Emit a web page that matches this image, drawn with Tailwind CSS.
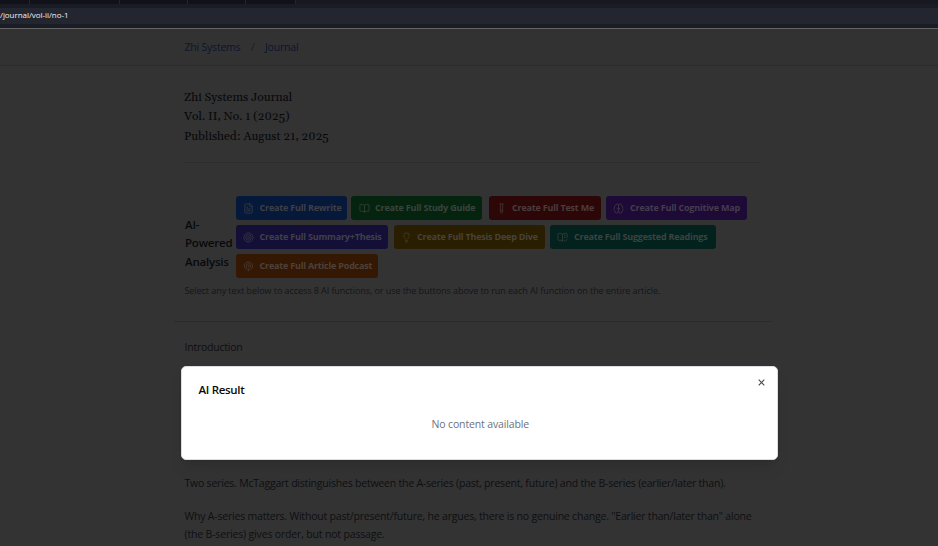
<!DOCTYPE html>
<html lang="en">
<head>
<meta charset="utf-8">
<title>Zhi Systems Journal</title>
<script src="https://cdn.jsdelivr.net/npm/@tailwindcss/browser@4"></script>
</head>
<body class="relative h-[546px] w-[938px] overflow-hidden bg-[#333] font-['Open_Sans','Noto_Sans',sans-serif] text-[10.5px] tracking-[-0.21px] whitespace-nowrap text-[#0e0f12]">
  <!-- browser chrome -->
  <div class="flex h-1 bg-[#181820]">
    <div class="flex w-[296px] bg-[#11111a]">
      <div class="w-[30px] border-r border-[#24252e]"></div>
      <div class="w-[90px] border-r border-[#24252e]"></div>
      <div class="w-[68px] border-r border-[#24252e]"></div>
      <div class="w-[58px] border-r border-[#24252e]"></div>
      <div class="w-[50px] border-r border-[#24252e]"></div>
    </div>
  </div>
  <div class="h-1 bg-[#1a1c25]"></div>
  <div class="flex h-4 items-center bg-[#23262f] text-[8px] leading-4 font-medium tracking-[-0.05px] text-[#f0f1f3]"><span class="relative -top-px">/journal/vol-ii/no-1</span></div>
  <div class="h-1 bg-[#1b1d26]"></div>
  <div class="h-px bg-[#646465]"></div>

  <nav class="flex h-[37px] items-center border-b border-[#2b2b2c] bg-[#323232] pt-[2px] pl-[184.5px] text-[#0b1530]">
    <span class="w-[66.500px]">Zhi Systems</span><span class="w-[14px] text-[#191b1f]">/</span><span>Journal</span>
  </nav>

  <main>
    <header class="ml-[184px] h-[97px] w-[576px] border-b border-[#2d2d2e] pt-[21.5px] font-['Gelasio','Georgia','Liberation_Serif',serif] text-[12px] leading-[19.5px] tracking-normal text-[#07080a] oldstyle-nums">
      <p>Zhi Systems Journal</p>
      <p>Vol. II, No. 1 (2025)</p>
      <p>Published: August 21, 2025</p>
    </header>

    <section class="ml-[174px] h-[159px] w-[598px] border-b border-[#2b2b2c] pt-[33px] pl-[10px]">
      <div class="flex h-[82px]">
        <h3 class="w-[52px] pt-[19.500px] pl-px text-[11.5px] leading-[18.8px] font-semibold tracking-[-0.2px] text-[#08090c]">AI-<br>Powered<br>Analysis</h3>
        <div class="flex flex-col gap-[5px] text-[9px] font-bold tracking-[-0.2px] text-[#3d4046]">
          <div class="flex h-6">
            <button class="mr-1 flex w-[111px] items-center gap-[6px] rounded-[3px] bg-[#07193a] pl-[6.500px]">
              <svg class="size-[11px] opacity-80" viewBox="0 0 24 24" fill="none" stroke="currentColor" stroke-width="2" stroke-linecap="round" stroke-linejoin="round"><path d="M15 2H6a2 2 0 0 0-2 2v16a2 2 0 0 0 2 2h12a2 2 0 0 0 2-2V7Z"/><path d="M14 2v4a2 2 0 0 0 2 2h4M10 9H8M16 13H8M16 17H8"/></svg>
              Create Full Rewrite</button>
            <button class="mr-[7px] flex w-[131px] items-center gap-[5px] rounded-[3px] bg-[#042410] pl-2 text-[#3a443d]">
              <svg class="size-[11px] opacity-80" viewBox="0 0 24 24" fill="none" stroke="currentColor" stroke-width="2" stroke-linecap="round" stroke-linejoin="round"><path d="M12 7v14"/><path d="M3 18a1 1 0 0 1-1-1V4a1 1 0 0 1 1-1h5a4 4 0 0 1 4 4 4 4 0 0 1 4-4h5a1 1 0 0 1 1 1v13a1 1 0 0 1-1 1h-6a3 3 0 0 0-3 3 3 3 0 0 0-3-3z"/></svg>
              Create Full Study Guide</button>
            <button class="mr-[5px] flex w-[112px] items-center gap-[5px] rounded-[3px] bg-[#2d0708] pl-[7px] text-[#4a3c3c]">
              <svg class="size-[11px] opacity-80" viewBox="0 0 24 24" fill="none" stroke="currentColor" stroke-width="2" stroke-linecap="round" stroke-linejoin="round"><path d="M14.5 2v17.5c0 1.4-1.1 2.5-2.5 2.5s-2.5-1.1-2.5-2.5V2M8.500 2h7M14.500 16h-5"/></svg>
              Create Full Test Me</button>
            <button class="flex w-[141px] items-center gap-[6px] rounded-[3px] bg-[#1e0a36] pl-[7px] text-[#443d4c]">
              <svg class="size-[11px] opacity-80" viewBox="0 0 24 24" fill="none" stroke="currentColor" stroke-width="2" stroke-linecap="round" stroke-linejoin="round"><path d="M12 5a3 3 0 1 0-5.997.125 4 4 0 0 0-2.526 5.770 4 4 0 0 0 .556 6.588A4 4 0 1 0 12 18Z"/><path d="M12 5a3 3 0 1 1 5.997.125 4 4 0 0 1 2.526 5.770 4 4 0 0 1-.556 6.588A4 4 0 1 1 12 18Z"/><path d="M15 13a4.500 4.500 0 0 1-3-4 4.500 4.500 0 0 1-3 4"/></svg>
              Create Full Cognitive Map</button>
          </div>
          <div class="flex h-6">
            <button class="mr-[6px] flex w-[152px] items-center gap-[6px] rounded-[3px] bg-[#130f36] pl-[6.500px] text-[#403f4c]">
              <svg class="size-[11px] opacity-80" viewBox="0 0 24 24" fill="none" stroke="currentColor" stroke-width="2"><circle cx="12" cy="12" r="10"/><circle cx="12" cy="12" r="6"/><circle cx="12" cy="12" r="2"/></svg>
              Create Full Summary+Thesis</button>
            <button class="mr-[5px] flex w-[151px] items-center gap-[5px] rounded-[3px] bg-[#2a1e00] pl-[7px] text-[#48423a]">
              <svg class="size-[11px] opacity-80" viewBox="0 0 24 24" fill="none" stroke="currentColor" stroke-width="2" stroke-linecap="round" stroke-linejoin="round"><path d="M15 14c.2-1 .7-1.700 1.500-2.500 1-.9 1.500-2.200 1.500-3.500A6 6 0 0 0 6 8c0 1 .2 2.200 1.500 3.500.7.7 1.300 1.500 1.500 2.500M9 18h6M10 22h4"/></svg>
              Create Full Thesis Deep Dive</button>
            <button class="flex w-[166px] items-center gap-[6px] rounded-[3px] bg-[#03211d] pl-[7px] text-[#3a4442]">
              <svg class="size-[11px] opacity-80" viewBox="0 0 24 24" fill="none" stroke="currentColor" stroke-width="2" stroke-linecap="round" stroke-linejoin="round"><path d="M12 21V7M16 12h2M16 8h2"/><path d="m16 18 2 2 4-4"/><path d="M22 12V4a1 1 0 0 0-1-1h-5a4 4 0 0 0-4 4 4 4 0 0 0-4-4H3a1 1 0 0 0-1 1v13a1 1 0 0 0 1 1h6a3 3 0 0 1 3 3"/></svg>
              Create Full Suggested Readings</button>
          </div>
          <div class="flex h-6">
            <button class="flex w-[142px] items-center gap-[6px] rounded-[3px] bg-[#351803] pl-[6.500px] text-[#4c423b]">
              <svg class="size-[11px] opacity-80" viewBox="0 0 24 24" fill="none" stroke="currentColor" stroke-width="2" stroke-linecap="round" stroke-linejoin="round"><path d="M16.850 18.580a9 9 0 1 0-9.700 0"/><path d="M8 14a5 5 0 1 1 8 0"/><circle cx="12" cy="11" r="1"/><path d="M13 17a1 1 0 1 0-2 0l.5 4.500a.5.5 0 1 0 1 0Z"/></svg>
              Create Full Article Podcast</button>
          </div>
        </div>
      </div>
      <p class="mt-[5px] pl-[0.500px] text-[9px] leading-4 tracking-[-0.062px] text-[#131518]">Select any text below to access 8 AI functions, or use the buttons above to run each AI function on the entire article.</p>
    </section>

    <article class="pt-4 pl-[184.500px] leading-[18px] tracking-[-0.2px]">
      <h2 class="tracking-[-0.23px]">Introduction</h2>
      <p class="mt-[118px] tracking-[-0.21px]">Two series. McTaggart distinguishes between the A-series (past, present, future) and the B-series (earlier/later than).</p>
      <p class="mt-[15px]">Why A-series matters. Without past/present/future, he argues, there is no genuine change. "Earlier than/later than" alone<br><span class="tracking-[-0.17px]">(the B-series) gives order, but not passage.</span></p>
    </article>
  </main>

  <!-- result dialog -->
  <div role="dialog" class="absolute top-[366px] left-[181px] h-[94px] w-[597px] rounded-[5px] border border-[#dcdde0] bg-white px-4 pt-[14px] shadow-lg">
    <h2 class="pl-[0.500px] text-[11.5px] leading-[18px] font-semibold tracking-[-0.31px] text-[#0a0a0c]">AI Result</h2>
    <p class="mt-4 pl-[1.500px] text-center leading-[18px] tracking-[-0.14px] text-[#6b7280]">No content available</p>
    <svg class="absolute top-[12px] right-[12px] size-[7px] text-[#4a4a4c]" viewBox="0 0 7 7" fill="none" stroke="currentColor" stroke-width="1.100"><path d="M.7.7l5.600 5.600M6.300.7L.7 6.300"/></svg>
  </div>
</body>
</html>
